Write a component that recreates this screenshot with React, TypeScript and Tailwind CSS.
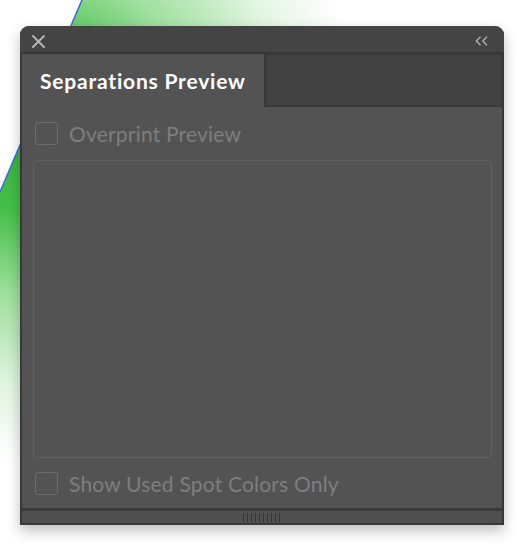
import React from "react";

const font = { fontFamily: "Lato, 'Open Sans', sans-serif" };

function Checkbox({ label }: { label: string }) {
  return (
    <div className="flex items-center gap-[11px] pl-[2px]">
      <div className="w-[23px] h-[23px] rounded-[3px] border-[1.5px] border-[#6c6c6c]" />
      <span className="text-[21px] leading-none tracking-[0.2px] text-[#7e7e7e]">{label}</span>
    </div>
  );
}

function Backdrop() {
  return (
    <svg className="absolute inset-0" width="530" height="548" viewBox="0 0 530 548">
      <defs>
        <radialGradient id="g" cx="30" cy="130" r="330" gradientUnits="userSpaceOnUse">
          <stop offset="0" stopColor="#36b338" />
          <stop offset="0.25" stopColor="#45bf48" />
          <stop offset="0.5" stopColor="#9ddf9d" />
          <stop offset="0.78" stopColor="#e2f5e1" />
          <stop offset="1" stopColor="#ffffff" />
        </radialGradient>
      </defs>
      <polygon points="82,0 530,0 530,548 0,548 0,192" fill="url(#g)" />
      <line x1="82" y1="0" x2="0" y2="192" stroke="#3f6fd8" strokeWidth="1.6" />
    </svg>
  );
}

export default function App() {
  return (
    <div className="relative w-[530px] h-[548px] overflow-hidden bg-white" style={font}>
      <Backdrop />
      <div className="relative ml-[20px] pt-[26px] w-[484px]">
        <div className="flex flex-col h-[499px] bg-[#383838] rounded-t-[9px] px-[2px] pb-[2px] shadow-[0_6px_14px_rgba(0,0,0,0.25)]">
          {/* title bar */}
          <div className="h-[26px] -mx-[2px] px-[12px] flex items-center justify-between bg-[#444444] rounded-t-[9px]">
            <svg width="13" height="13" viewBox="0 0 13 13" className="mt-[4px]">
              <path d="M1 1 L12 12 M12 1 L1 12" stroke="#b4b4b4" strokeWidth="2" strokeLinecap="round" />
            </svg>
            <svg width="13" height="10" viewBox="0 0 13 10" className="mt-[3px] mr-[4px]">
              <path d="M5.5 0.8 L1.3 5 L5.5 9.2 M12 0.8 L7.8 5 L12 9.2" stroke="#b0b0b0" strokeWidth="1.4" fill="none" />
            </svg>
          </div>
          {/* tabs */}
          <div className="mt-[2px] h-[53px] flex">
            <div className="w-[242px] bg-[#535353] flex items-center pl-[18px]">
              <span className="text-[21px] font-bold text-white leading-none tracking-[0.8px]">Separations Preview</span>
            </div>
            <div className="flex-1 ml-[2px] mb-[1px] bg-[#424242] border border-[#3b3b3b] rounded-tr-[2px]" />
          </div>
          {/* body */}
          <div className="flex-1 bg-[#535353] pl-[11px] pr-[10px] pt-[15px] flex flex-col">
            <Checkbox label="Overprint Preview" />
            <div className="mt-[15px] h-[298px] rounded-[4px] border border-[#606060]" />
            <div className="mt-[14px]">
              <Checkbox label="Show Used Spot Colors Only" />
            </div>
          </div>
          <div className="h-[3px] bg-[#3a3a3a]" />
          <div className="h-[12px] bg-[#505050] flex items-center justify-center">
            <div className="flex gap-[2.6px] h-[9px] -ml-[1px]">
              {Array.from({ length: 10 }).map((_, i) => (
                <div key={i} className="w-[1.4px] h-full bg-[#343434]" />
              ))}
            </div>
          </div>
        </div>
      </div>
    </div>
  );
}
